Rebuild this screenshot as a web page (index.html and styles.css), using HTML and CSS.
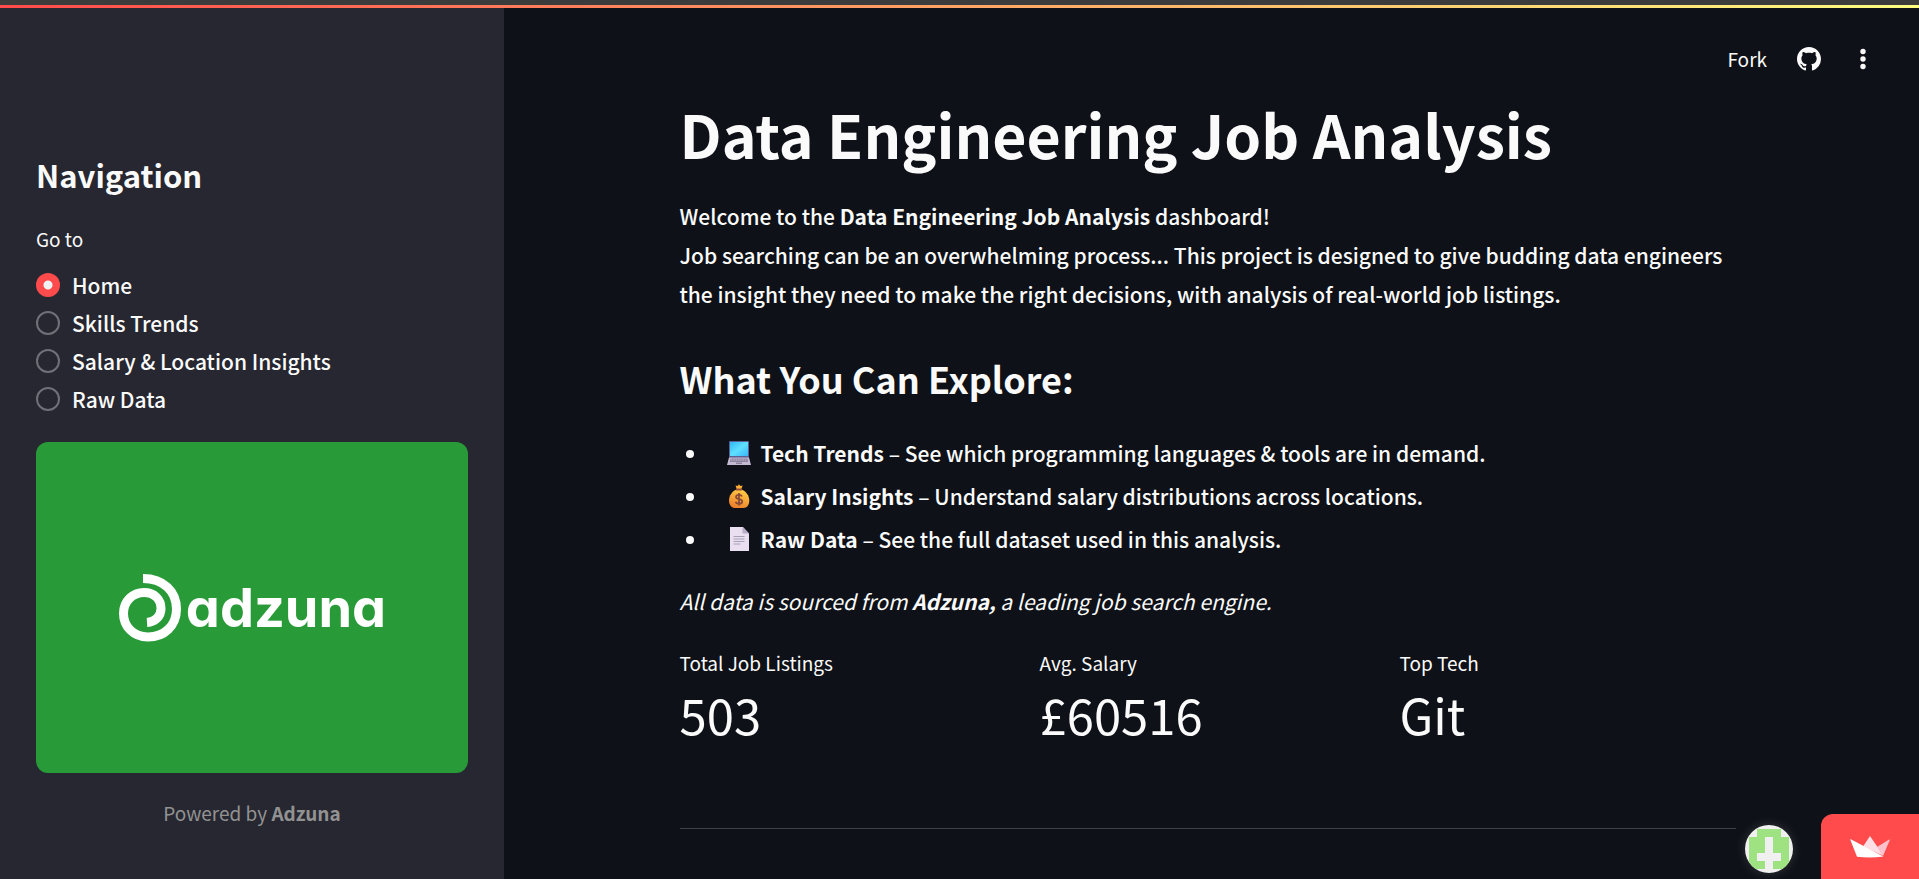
FILE: index.html
```html
<!DOCTYPE html>
<html lang="en">
<head>
<meta charset="utf-8">
<title>Data Engineering Job Analysis</title>
<link rel="stylesheet" href="styles.css">
</head>
<body>
<div class="strip"></div>
<div class="rainbow"></div>
<div class="app">
  <aside class="sidebar">
    <h2 class="nav-title">Navigation</h2>
    <fieldset class="radio-group">
      <legend class="small">Go to</legend>
      <label class="option"><input type="radio" name="page" checked>Home</label>
      <label class="option"><input type="radio" name="page">Skills Trends</label>
      <label class="option"><input type="radio" name="page">Salary &amp; Location Insights</label>
      <label class="option"><input type="radio" name="page">Raw Data</label>
    </fieldset>
    <div class="brand">
      <svg class="brand-mark" viewBox="0 0 64 70" width="64" height="70" aria-hidden="true">
        <path fill="none" stroke="#fff" stroke-width="9" d="M25 5.500C45 5.500 58.500 18 58.500 36C58.500 53 46 64 30 64C15 64 5.500 53 5.500 40.500C5.500 28 15 19.500 26 19.500C36.500 19.500 43 26.500 43 35.500C43 43.500 37 49 29 49.500"/>
      </svg>
      <span class="brand-name">adzuna</span>
    </div>
    <p class="powered small">Powered by <b>Adzuna</b></p>
  </aside>
  <main class="main">
    <header class="toolbar">
      <button class="tool" type="button">Fork</button>
      <button class="tool" type="button" aria-label="View source">
        <svg viewBox="0 0 16 16" width="24" height="24"><path fill="#fafafa" d="M8 0C3.580 0 0 3.580 0 8c0 3.540 2.290 6.530 5.470 7.590.4.070.55-.17.55-.38 0-.19-.01-.82-.01-1.490-2.010.37-2.530-.49-2.690-.94-.09-.23-.48-.94-.82-1.130-.28-.15-.68-.52-.01-.53.63-.01 1.080.58 1.230.82.72 1.210 1.870.87 2.330.66.070-.52.28-.87.510-1.070-1.780-.2-3.640-.89-3.640-3.950 0-.87.310-1.590.82-2.150-.08-.2-.36-1.020.08-2.120 0 0 .67-.21 2.200.82.64-.18 1.320-.27 2-.27s1.360.09 2 .27c1.530-1.040 2.200-.82 2.200-.82.44 1.100.16 1.920.08 2.120.51.56.82 1.270.82 2.150 0 3.070-1.870 3.750-3.650 3.950.29.25.54.73.54 1.480 0 1.070-.01 1.930-.01 2.200 0 .21.15.46.55.38A8.010 8.010 0 0 0 16 8c0-4.420-3.580-8-8-8z"/></svg>
      </button>
      <button class="tool" type="button" aria-label="Menu">
        <svg viewBox="0 0 24 24" width="24" height="24" fill="#fafafa"><circle cx="12" cy="4.500" r="2.700"/><circle cx="12" cy="12" r="2.700"/><circle cx="12" cy="19.500" r="2.700"/></svg>
      </button>
    </header>
    <div class="content">
      <h1 class="title">Data Engineering Job Analysis</h1>
      <p class="intro">Welcome to the <b>Data Engineering Job Analysis</b> dashboard!<br>Job searching can be an overwhelming process... This project is designed to give budding data engineers the insight they need to make the right decisions, with analysis of real-world job listings.</p>
      <h2 class="subtitle">What You Can Explore:</h2>
      <ul class="features">
        <li><span class="feature">
          <svg class="glyph" viewBox="0 0 24 24" width="24" height="24" aria-hidden="true"><defs><linearGradient id="scr" x1="0" y1="0" x2="1" y2="1"><stop offset="0" stop-color="#2fb4f5"/><stop offset=".5" stop-color="#5fe0ff"/><stop offset="1" stop-color="#37b6fa"/></linearGradient></defs><rect x="2" y="0" width="20" height="17" rx="1" fill="#5b5f94"/><rect x="3" y="1" width="18" height="14" fill="url(#scr)"/><path d="M2 16.500h20l2 7.500H0z" fill="#c5bad3"/><path d="M3.500 17.500h17l.6 3.500H2.900z" fill="#8d839f"/><path d="M4 19h16" stroke="#c5bad3" stroke-dasharray="1.500 .8"/><path d="M9 21.500h6v1.500H9z" fill="#8d839f"/></svg>
          <span><b>Tech Trends</b> – See which programming languages &amp; tools are in demand.</span></span></li>
        <li><span class="feature">
          <svg class="glyph" viewBox="0 0 24 24" width="24" height="24" aria-hidden="true"><defs><linearGradient id="bag" x1=".7" y1="0" x2=".3" y2="1"><stop offset="0" stop-color="#ffcf45"/><stop offset="1" stop-color="#ec7d2b"/></linearGradient></defs><path d="M8.500 1.500l2.200.6L12 .2l1.400 1.900 2.200-.6-1.200 3.500H9.700z" fill="#ffae35"/><path d="M9.500 5.500C5 7.500 2 11.500 2 16.500 2 21.500 5 24 8 24h8.500c3.500 0 5.800-3 5.800-7.500 0-5-3.300-9-7.800-11z" fill="url(#bag)"/><path d="M9 4.500h6v2H9z" fill="#99503b"/><path d="M15 12.500c-.5-1.300-1.600-1.700-3-1.700-1.800 0-3 .9-3 2.200 0 3.200 6.200 1.200 6.200 4.500 0 1.300-1.200 2.300-3.200 2.300-1.700 0-2.900-.7-3.300-2.100M12 9v12.500" fill="none" stroke="#874b37" stroke-width="1.800"/></svg>
          <span><b>Salary Insights</b> – Understand salary distributions across locations.</span></span></li>
        <li><span class="feature">
          <svg class="glyph" viewBox="0 0 24 24" width="24" height="24" aria-hidden="true"><path d="M3 0h13l6 6.500V24H3z" fill="#e9dff1"/><path d="M15.500 0v6.500H22z" fill="#b9acc6"/><path d="M6.500 9.500h11M6.500 12h11M6.500 14.500h11M6.500 17h7" stroke="#aaa0b5"/></svg>
          <span><b>Raw Data</b> – See the full dataset used in this analysis.</span></span></li>
      </ul>
      <p class="source"><em>All data is sourced from <b>Adzuna,</b> a leading job search engine.</em></p>
      <dl class="metrics">
        <div><dt class="small">Total Job Listings</dt><dd>503</dd></div>
        <div><dt class="small">Avg. Salary</dt><dd>£60516</dd></div>
        <div><dt class="small">Top Tech</dt><dd>Git</dd></div>
      </dl>
      <hr class="rule">
    </div>
  </main>
</div>
<div class="floating">
  <a class="avatar" href="#" aria-label="Creator profile">
    <svg viewBox="0 0 48 48" width="48" height="48"><path fill="#f0f0f0" d="M0 0h48v48H0z"/><path fill="#9fe282" d="M4 12h8V4h24v8h8v32H28v-8h8v-8h-8V12h-8v16h-8v8h8v8H4z"/></svg>
  </a>
  <a class="badge" href="#" aria-label="Hosted with Streamlit">
    <svg viewBox="0 0 40 22" width="40" height="22"><path fill="#ffe0e6" d="M13 10.500L20 0l7.500 11 5.500 8.500z"/><path fill="#ffc2cc" d="M27 11l12.200-7.500c.4-.2.800.1.600.6L33 20z"/><path fill="#fff" d="M.8 3.200L33.500 20.500c-9 1.200-18 1.200-26.500.2L.3 3.700c-.1-.4.100-.7.500-.5z"/></svg>
  </a>
</div>
</body>
</html>
```
FILE: styles.css
```css
* { box-sizing: border-box; }

body {
  margin: 0;
  min-height: 100vh;
  display: flex;
  flex-direction: column;
  background: #0e1117;
  color: #fafafa;
  font-family: "Noto Sans CJK SC", "Open Sans", sans-serif;
  font-size: 21px;
  font-weight: 500;
  line-height: 38px;
}

h1, h2, p, ul, dl, dd { margin: 0; }
b { font-weight: 700; }

.small { font-size: 19px; line-height: 30px; }

.strip { height: 5px; background: #3c3c3c; }

.rainbow {
  height: 3px;
  background: linear-gradient(90deg, #ff4b4b, #fffd80);
}

.app { flex: 1; display: flex; }

.sidebar {
  flex: none;
  width: 504px;
  padding: 145px 36px 0;
  background: #262730;
}

.nav-title { font-size: 31px; line-height: 43px; }

.radio-group { margin: 28px 0 24px; padding: 0; border: 0; }
.radio-group legend { padding: 0; margin-bottom: 12px; font-weight: 400; }

.option { display: flex; align-items: center; gap: 12px; }

.option input {
  appearance: none;
  width: 24px;
  height: 24px;
  margin: 0;
  border: 2px solid #6f7078;
  border-radius: 50%;
}

.option input:checked {
  border: 0;
  background: radial-gradient(circle, #f0f2f6 4px, #ff4b4b 5px);
}

.brand {
  display: flex;
  align-items: center;
  justify-content: center;
  gap: 4px;
  aspect-ratio: 432 / 331;
  border-radius: 12px;
  background: #289b38;
  color: #fff;
}

.brand-name {
  font: 700 54px/70px Inter, sans-serif;
  font-feature-settings: "cv11";
}

.powered { margin-top: 25px; text-align: center; color: #929292; font-weight: 400; }

.main { flex: 1; padding-right: 8px; }

.toolbar {
  display: flex;
  justify-content: flex-end;
  align-items: center;
  gap: 30px;
  padding: 32px 36px 0 0;
}

.tool {
  display: flex;
  padding: 0;
  border: 0;
  background: none;
  color: #fafafa;
  font: inherit;
  font-size: 19px;
  font-weight: 400;
}

.content { max-width: 1056px; margin: 16px auto 0; }

.title { font-size: 59px; line-height: 79px; }

.intro { margin-top: 24px; line-height: 39px; }

.subtitle { margin-top: 39px; font-size: 36px; line-height: 50px; }

.features {
  display: grid;
  gap: 5px;
  margin-top: 31px;
  padding-left: 29px;
}

.features li { padding-left: 18px; }

.feature { display: inline-flex; align-items: center; gap: 10px; vertical-align: top; }

.source { margin-top: 24px; font-weight: 400; }

.metrics {
  display: grid;
  grid-template-columns: repeat(3, 1fr);
  gap: 24px;
  margin-top: 28px;
  font-weight: 400;
}

.metrics dd { font-size: 49px; line-height: 72px; }

.rule {
  height: 1px;
  margin: 78px 0 0;
  border: 0;
  background: #3f4147;
}

.floating {
  position: fixed;
  right: 0;
  bottom: 0;
  display: flex;
  align-items: flex-end;
  gap: 28px;
}

.avatar {
  display: flex;
  margin-bottom: 6px;
  border-radius: 50%;
  overflow: hidden;
  box-shadow: 0 0 12px rgba(255, 255, 255, 0.15);
}

.badge {
  display: flex;
  align-items: center;
  justify-content: center;
  width: 98px;
  height: 65px;
  border-top-left-radius: 12px;
  background: #ff4b4b;
}
```
